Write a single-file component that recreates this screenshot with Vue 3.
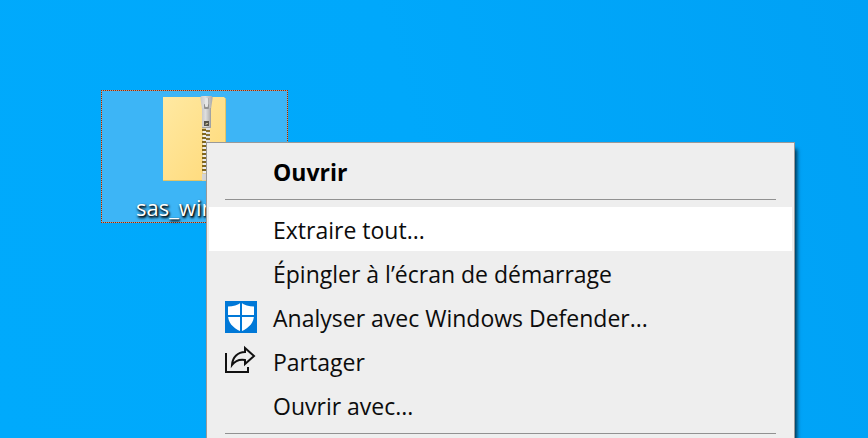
<script setup>

import { ref } from 'vue'

const actif = ref('extraire')

const actions = [
    { id: 'extraire', texte: 'Extraire tout...' },
    { id: 'epingler', texte: 'Épingler à l’écran de démarrage' },
    { id: 'analyser', texte: 'Analyser avec Windows Defender...', icone: 'bouclier' },
    { id: 'partager', texte: 'Partager', icone: 'partage' },
    { id: 'avec', texte: 'Ouvrir avec...' },
]

// dents de la fermeture éclair
const dents = Array.from({ length: 11 }, (_, i) => 34 + i * 4)

</script>

<template>

<main class="bureau">
    <div class="fichier">
        <svg class="dossier" viewBox="0 0 64 88" aria-hidden="true">
            <defs>
                <linearGradient id="papier" x1="0" y1="0" x2="1" y2="1">
                    <stop offset="0" stop-color="#ffe9a2" />
                    <stop offset="1" stop-color="#ffd978" />
                </linearGradient>
                <linearGradient id="metal" x1="0" y1="0" x2="1" y2="0">
                    <stop offset="0" stop-color="#c9c9c9" />
                    <stop offset="0.4" stop-color="#dedede" />
                    <stop offset="1" stop-color="#a8a8a8" />
                </linearGradient>
            </defs>
            <path d="M0 2H61L63 4V86H0Z" fill="url(#papier)" />
            <path d="M62.500 4V86M0 85.500H63" stroke="#e3c566" stroke-width="1" fill="none" />
            <rect x="39" y="32" width="8" height="54" fill="#e4cf93" />
            <g v-for="y in dents" :key="y">
                <rect x="39" :y="y" width="4" height="2" fill="#81671f" />
                <rect x="40" :y="y + 2" width="4" height="2" fill="#eeeeee" />
                <rect x="43" :y="y + 1" width="4" height="2" fill="#8c7332" />
                <rect x="43" :y="y - 1" width="4" height="2" fill="#e2e2e2" />
            </g>
            <rect x="39" y="79" width="8" height="6" fill="#d4d4d4" />
            <path d="M39 1H48Q50 1 49.500 4L48 14H39L37.500 4Q37 1 39 1Z" fill="url(#metal)" />
            <path d="M39 13H48V33H39Z" fill="url(#metal)" />
            <path d="M47.500 13V32.500H39" stroke="#a2a2a2" fill="none" />
            <rect x="41" y="9" width="5" height="5" rx="1" fill="#929292" />
            <rect x="42" y="3" width="3" height="9" rx="1" fill="#e6e6e6" />
            <path d="M45.500 3V9" stroke="#b0b0b0" fill="none" />
            <rect x="41" y="26" width="5" height="5" fill="#55524a" />
            <path d="M43 30V28.500H45" stroke="#c5bd98" fill="none" />
        </svg>
        <span class="nom">sas_win</span>
    </div>

    <div class="menu" role="menu">
        <button class="ligne principal" type="button" role="menuitem">Ouvrir</button>
        <hr>
        <button
            v-for="action in actions"
            :key="action.id"
            class="ligne"
            :class="{ actif: actif === action.id }"
            type="button"
            role="menuitem"
            @mouseenter="actif = action.id"
        >
            <svg v-if="action.icone === 'bouclier'" class="icone" viewBox="0 0 32 32" aria-hidden="true">
                <rect width="32" height="32" fill="#0078d7" />
                <path d="M16 1.500C19 4 24 5.500 29 5.500V14C29 21 25 26.500 16 30.500C7 26.500 3 21 3 14V5.500C8 5.500 13 4 16 1.500Z" fill="#ffffff" />
                <path d="M16 1V31M2 15H30" stroke="#0078d7" stroke-width="2" fill="none" />
            </svg>
            <svg v-else-if="action.icone === 'partage'" class="icone" viewBox="0 0 32 32" aria-hidden="true">
                <path d="M1 8V27H23V22" stroke="#111111" stroke-width="2" fill="none" />
                <path d="M20 3L29 11L20 19V15C14 14 10 16 7 20C7.500 12 13 7 20 7Z" stroke="#111111" stroke-width="2" fill="none" />
            </svg>
            {{ action.texte }}
        </button>
        <hr>
    </div>
</main>

</template>

<style>
body {
    margin: 0;
}
</style>

<style scoped>

.bureau {
    position: relative;
    height: 100vh;
    overflow: hidden;
    background: linear-gradient(75deg, #00aafc, #00a8fb 50%, #00a1f5);
    font-family: 'Open Sans', 'Noto Sans', sans-serif;
}

/* le cadre pointillé est dessiné en fond, un pixel sur deux */
.fichier {
    --pointh: repeating-linear-gradient(90deg, #8e2c08 0 1px, #c09a88 1px 2px);
    --pointv: repeating-linear-gradient(180deg, #8e2c08 0 1px, #c09a88 1px 2px);
    position: absolute;
    left: 101px;
    top: 90px;
    box-sizing: border-box;
    width: 187px;
    height: 133px;
    padding: 1px;
    background:
        var(--pointh) top / 100% 1px no-repeat,
        var(--pointh) bottom / 100% 1px no-repeat,
        var(--pointv) left / 1px 100% no-repeat,
        var(--pointv) right / 1px 100% no-repeat,
        #3db5f6;
}

.dossier {
    display: block;
    width: 64px;
    height: 88px;
    margin: 4px auto 0;
}

.nom {
    display: block;
    padding-left: 34px;
    margin-top: 8px;
    font-size: 22px;
    line-height: 32px;
    color: white;
    text-shadow: 1px 2px 3px #000000, 1px 1px 2px #000000;
}

.menu {
    position: absolute;
    left: 206px;
    right: 73px;
    top: 142px;
    padding: 6px 2px;
    border: 1px solid #999999;
    background: #eeeeee;
    box-shadow: 3px 6px 4px -1px rgba(0, 0, 0, 0.7);
}

.ligne {
    position: relative;
    display: flex;
    align-items: center;
    width: 100%;
    height: 44px;
    padding: 2px 16px 0 64px;
    border: none;
    background: none;
    font-family: inherit;
    font-size: 23px;
    color: #0c0c0c;
    text-align: left;
}

.principal {
    font-weight: bold;
    color: black;
}

.actif {
    background: white;
}

.icone {
    position: absolute;
    left: 16px;
    top: 6px;
    width: 32px;
    height: 32px;
}

hr {
    height: 1px;
    margin: 6px 16px 7px;
    border: none;
    background: #919191;
}

</style>
